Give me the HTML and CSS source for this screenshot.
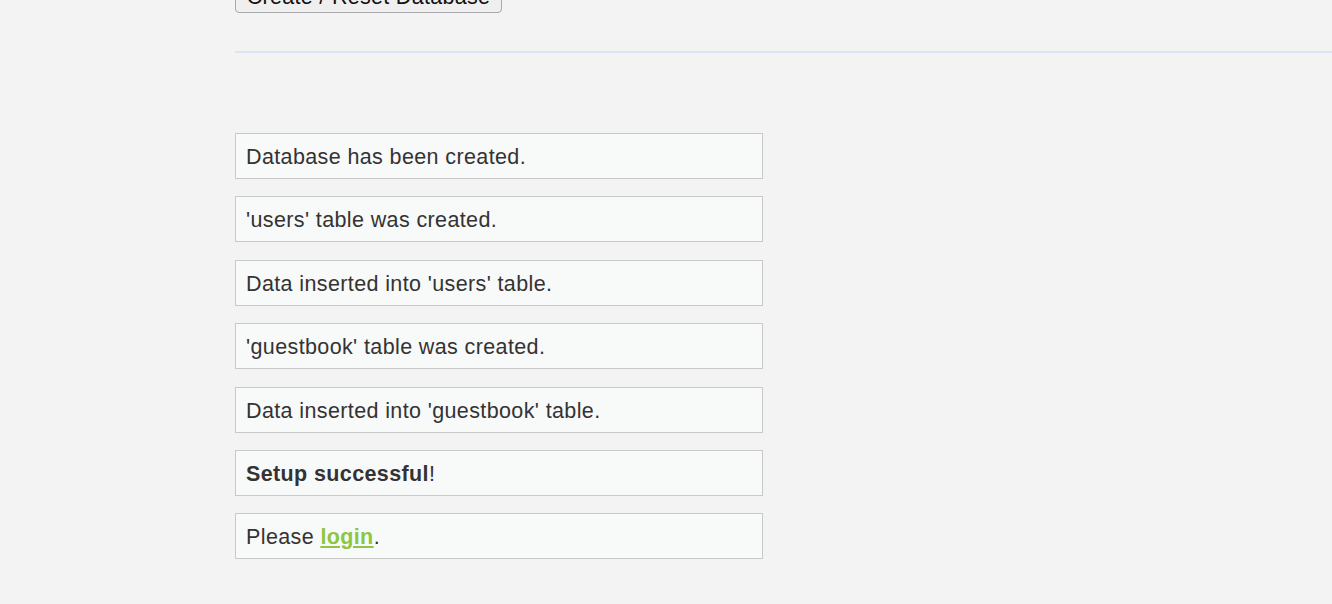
FILE: index.html
```html
<!DOCTYPE html>
<html>
<head>
<meta charset="utf-8">
<link rel="stylesheet" href="styles.css">
</head>
<body>
<div class="page">
  <form class="setup-form">
    <button type="button" class="btn">Create / Reset Database</button>
  </form>
  <hr class="divider">
  <div class="messages">
    <div class="msg">Database has been created.</div>
    <div class="msg">'users' table was created.</div>
    <div class="msg">Data inserted into 'users' table.</div>
    <div class="msg">'guestbook' table was created.</div>
    <div class="msg">Data inserted into 'guestbook' table.</div>
    <div class="msg"><b>Setup successful</b>!</div>
    <div class="msg">Please <a href="#" class="link">login</a>.</div>
  </div>
</div>
</body>
</html>
```
FILE: styles.css
```css
html, body {
  margin: 0;
  padding: 0;
  background: #f3f3f3;
  font-family: "Liberation Sans", Arial, sans-serif;
  color: #333;
  overflow: hidden;
}
.page {
  margin-left: 235px;
  margin-top: -19px;
}
.setup-form {
  margin: 0;
}
.btn {
  font-family: "Liberation Sans", Arial, sans-serif;
  font-size: 21.5px;
  letter-spacing: 0.3px;
  line-height: 24px;
  color: #111;
  background: #efefef;
  border: 1px solid #a8a8ad;
  border-radius: 4px;
  padding: 3px 10px;
  width: 267px;
  box-sizing: border-box;
  white-space: nowrap;
}
.divider {
  border: 0;
  height: 2px;
  background: #d9e4f6;
  margin: 38px 0 0 0;
}
.messages {
  margin-top: 80px;
}
.msg {
  width: 528px;
  box-sizing: border-box;
  background: #f8f9f9;
  border: 1px solid #c9c9c9;
  font-size: 21.5px;
  letter-spacing: 0.38px;
  line-height: 24px;
  padding: 11px 10px 9px;
  margin-bottom: 17.4px;
}
.msg b {
  font-weight: bold;
}
.link {
  color: #8dc63f;
  font-weight: bold;
  text-decoration: underline;
}
```
